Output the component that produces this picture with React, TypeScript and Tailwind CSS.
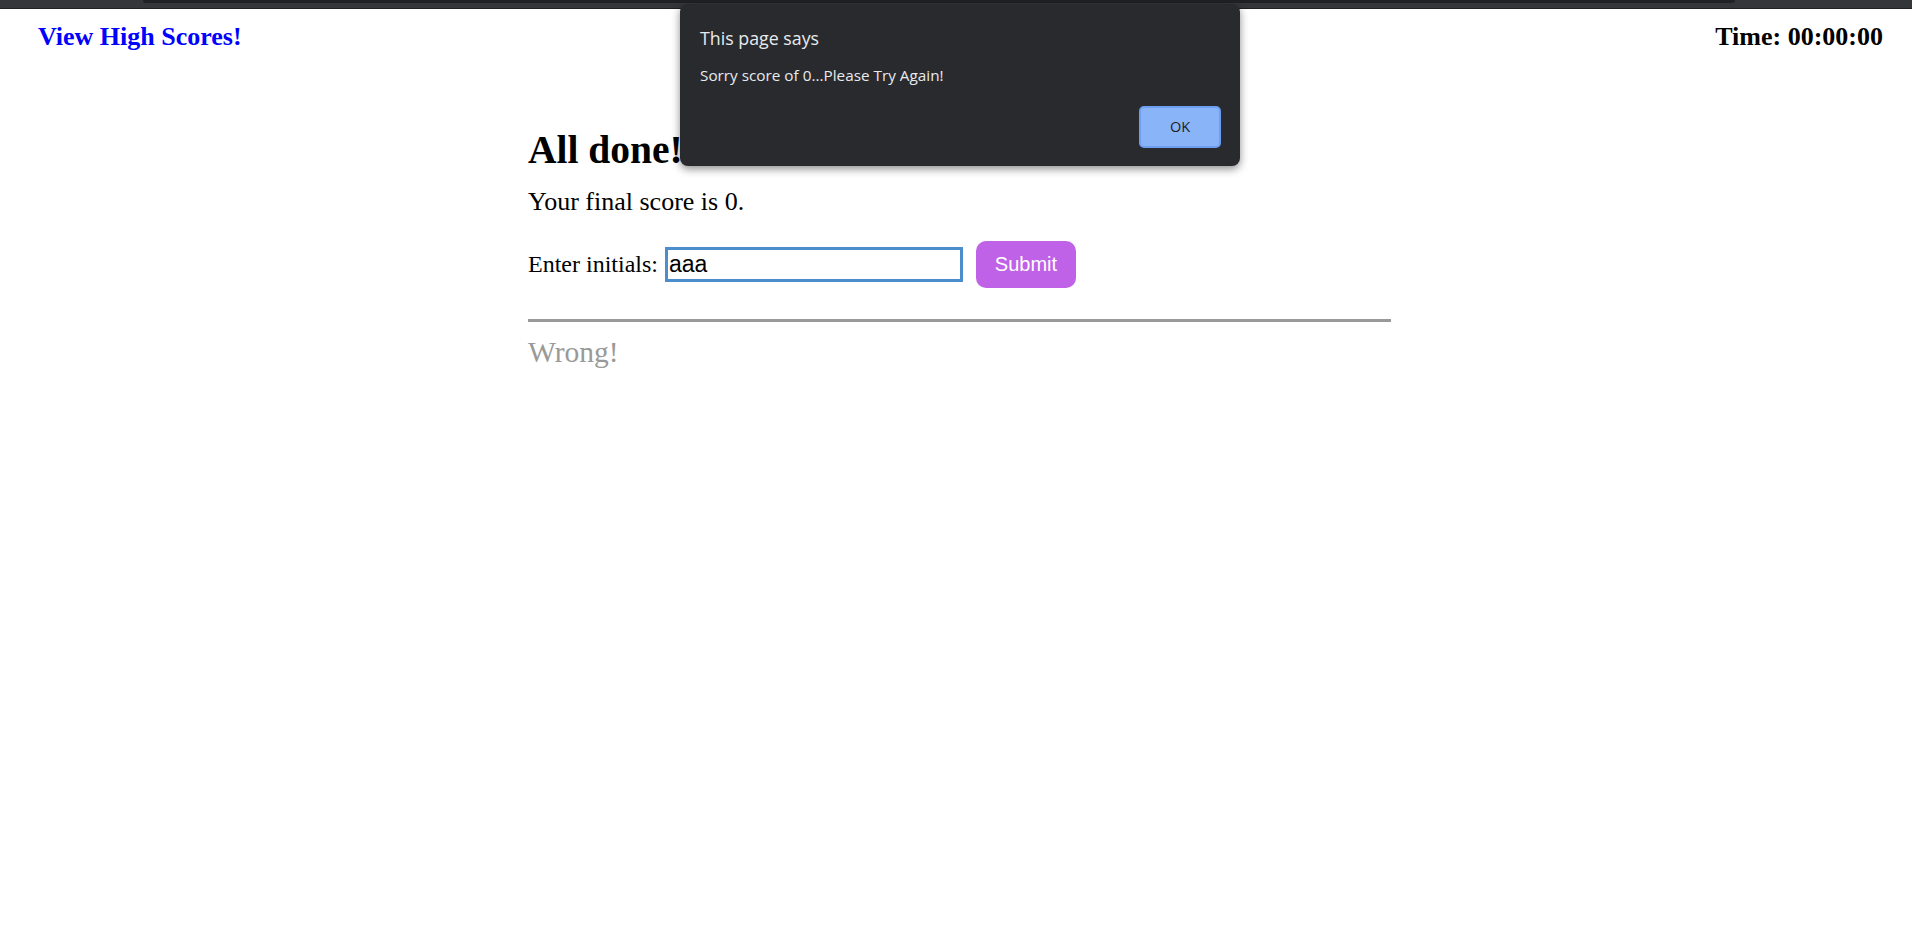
import React, { useState } from 'react';

// Browser "alert" dialog that sits over the page
const AlertBox: React.FC<{ message: string }> = ({ message }) => {
  return (
    <div className="absolute left-[680px] top-[4px] w-[560px] h-[162px] bg-[#292a2d] rounded-[8px] shadow-[0_3px_8px_rgba(0,0,0,0.45)] flex flex-col pl-[20px] pr-[19px] pb-[18px] font-['Open_Sans',sans-serif]">
      <p className="pt-[26px] text-[17.8px] leading-none text-[#e8eaed]">This page says</p>
      <p className="mt-[20px] text-[15.3px] leading-none text-[#e8eaed]">{message}</p>
      <div className="mt-auto flex justify-end">
        <button className="w-[82px] h-[42px] rounded-[5px] bg-[#8ab4f8] border-2 border-[#6e9ef2] text-[14.5px] text-[#202124]">
          OK
        </button>
      </div>
    </div>
  );
};

const App: React.FC = () => {
  const [initials, setInitials] = useState('aaa');

  return (
    <div className="relative min-h-screen bg-white text-black font-['Liberation_Serif','Times_New_Roman',serif]">
      {/* strip of browser chrome left at the top */}
      <div className="relative h-[9px] bg-[#35363a] border-b border-[#1f2023]">
        <div className="absolute left-[143px] right-[177px] top-0 h-[3px] bg-[#202124] rounded-b-[3px]" />
      </div>

      <header className="flex justify-between pl-[38px] pr-[29px] pt-[15px] text-[26px] leading-none font-bold">
        <a href="#" className="text-[#0000ff]">View High Scores!</a>
        <span>Time: 00:00:00</span>
      </header>

      <main className="ml-[528px] w-[863px]">
        <h2 className="mt-[81px] text-[39.5px] leading-none font-bold">All done!</h2>
        <p className="mt-[18px] text-[26px] leading-none">Your final score is 0.</p>
        <div className="mt-[26px] flex items-center">
          <label className="text-[24px] leading-none">Enter initials:</label>
          <input
            value={initials}
            onChange={e => setInitials(e.target.value)}
            className="ml-[7px] w-[298px] h-[35px] border-[3px] border-[#4b8dcd] px-[1px] text-[23px] leading-none font-['Liberation_Sans',Arial,sans-serif] outline-none"
          />
          <button className="ml-[13px] w-[100px] h-[47px] rounded-[10px] bg-[#c062e7] text-white text-[20px] font-['Liberation_Sans',Arial,sans-serif]">
            Submit
          </button>
        </div>
        <div className="mt-[31px] h-[3px] bg-[#999999]" />
        <p className="mt-[16px] text-[29.5px] leading-none text-[#999999]">Wrong!</p>
      </main>

      <AlertBox message="Sorry score of 0...Please Try Again!" />
    </div>
  );
};

export default App;
